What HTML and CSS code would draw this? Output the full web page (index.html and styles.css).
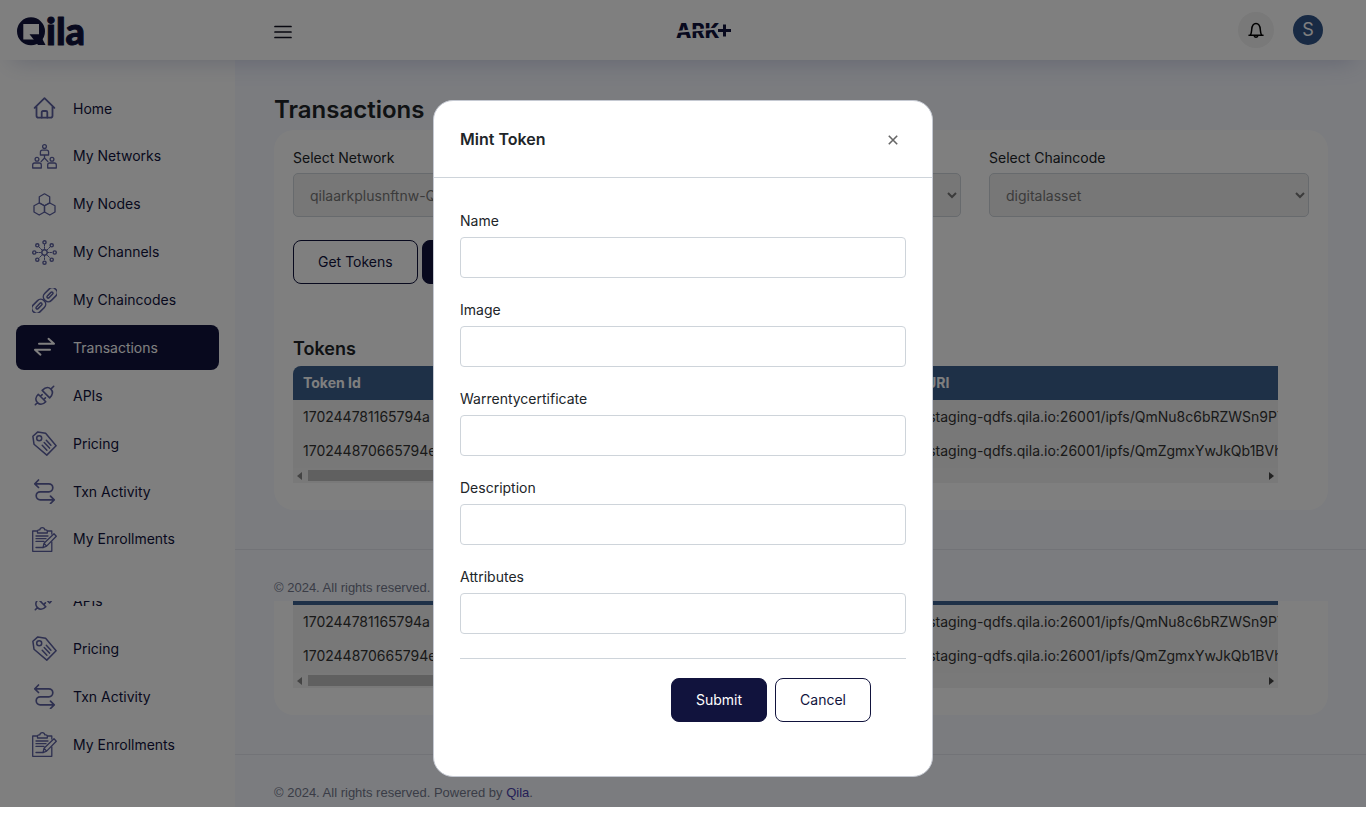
FILE: index.html
```html
<!DOCTYPE html>
<html lang="en">
<head>
<meta charset="utf-8">
<meta name="viewport" content="width=device-width, initial-scale=1">
<title>Qila - Transactions</title>
<link rel="stylesheet" href="styles.css">
</head>
<body>
<svg class="sprite" aria-hidden="true">
  <symbol id="i-home" viewBox="0 0 25 25"><g stroke-width="1.8"><path d="M2.6 11.8 12.5 2.2l9.9 9.6M4.5 10.5v9.3c0 1.1.8 1.9 1.9 1.9h12.2c1.1 0 1.9-.8 1.9-1.9v-9.3"/><path d="M9.7 21.5v-5.2c0-.8.5-1.3 1.3-1.3h3c.8 0 1.3.5 1.3 1.3v5.2"/></g></symbol>
  <symbol id="i-net" viewBox="0 0 25 25"><g stroke-width="1.3"><circle cx="12.5" cy="2.6" r="1.9"/><path d="M8.4 11V8.2c0-1.2.8-2 2-2h4.2c1.2 0 2 .8 2 2V11zM12.5 11v3l-3.4 3.6M12.5 14l3.4 3.6"/><circle cx="5" cy="15.3" r="1.9"/><path d="M.7 24v-3c0-1.200.8-2 2-2h4.600c1.200 0 2 .8 2 2v3z"/><circle cx="20" cy="15.300" r="1.900"/><path d="M15.700 24v-3c0-1.200.8-2 2-2h4.600c1.200 0 2 .8 2 2v3z"/></g></symbol>
  <symbol id="i-nodes" viewBox="0 0 25 25"><g stroke-width="1.3"><path d="M12.500 1.800l5.200 2.900v6l-5.200 3-5.200-3v-6z"/><path d="M7.200 11l5.300 2.800v6.200l-5.300 3L2 20v-6.200z"/><path d="M17.800 11l5.200 2.800v6.200l-5.200 3-5.300-3v-6.200z"/></g></symbol>
  <symbol id="i-chan" viewBox="0 0 25 25"><g stroke-width="1.4"><circle cx="12.500" cy="12.500" r="2.700"/><circle cx="12.500" cy="2.300" r="1.600"/><circle cx="12.500" cy="22.700" r="1.600"/><circle cx="2.300" cy="12.500" r="1.600"/><circle cx="22.700" cy="12.500" r="1.600"/><circle cx="5.300" cy="5.300" r="1.600"/><circle cx="19.700" cy="5.300" r="1.600"/><circle cx="5.300" cy="19.700" r="1.600"/><circle cx="19.700" cy="19.700" r="1.600"/></g><path stroke-width="1" stroke-dasharray="1.500 1" d="M12.500 4.500v5M12.500 15.500v5M4.500 12.500h5M15.500 12.500h5M7 7l3.500 3.500M14.500 14.500 18 18M18 7l-3.500 3.500M10.500 14.500 7 18"/></symbol>
  <symbol id="i-chain" viewBox="0 0 25 25"><g stroke-width="1.5" transform="rotate(-45 12.500 12.500)"><rect x="-3.300" y="7.700" width="15.300" height="9.600" rx="4.500"/><rect x="13" y="7.700" width="15.300" height="9.600" rx="4.500"/><rect x="1" y="11.300" width="7.500" height="2.400" rx="1.200"/><rect x="16.500" y="11.300" width="7.500" height="2.400" rx="1.200"/></g></symbol>
  <symbol id="i-swap" viewBox="0 0 25 25"><path stroke-width="2" d="M7 8.800h15l-5.500-5M18 14.700H3l5.500 5"/></symbol>
  <symbol id="i-api" viewBox="0 0 25 25"><g stroke-width="1.600" transform="rotate(-45 12.500 12.500)"><path d="M-.500 12.500H2.500M9 7.200c-4.500 0-6.500 2.300-6.500 5.300s2 5.300 6.500 5.300zM9 10.200h2.500M9 14.800h2.500M14.500 7.200v10.600c5 0 7-2.300 7-5.300s-2-5.300-7-5.300zM21.500 12.500h4"/></g></symbol>
  <symbol id="i-tag" viewBox="0 0 25 25"><g stroke-width="1.500"><path d="M.900 5.300 5.800.900l7.800 1.400 10.500 12.500-9.300 9.300L2 13.200z"/><circle cx="7.200" cy="7.200" r="2.500"/><path d="M10.200 14.200l4.700 5M12.200 11.500l5.300 5.600M14.300 9.200l4.600 5"/></g></symbol>
  <symbol id="i-txn" viewBox="0 0 25 25"><path stroke-width="1.700" d="M6.500 1 2.800 4.800l3.700 3.700M3.200 4.800h13.600a4 4 0 0 1 0 8H8.200a4 4 0 0 0 0 8h13.600M18.500 17.200l3.700 3.700-3.700 3.600"/></symbol>
  <symbol id="i-enroll" viewBox="0 0 25 25"><g stroke-width="1.300"><path d="M5.500 4H.700v20.300h19.100V15M19.800 7V4h-4.500M5.500 6V4.300c0-.9.600-1.500 1.500-1.500h.8C8 1.500 9 .700 10.300.700s2.300.8 2.500 2.100h1c.9 0 1.500.6 1.500 1.500V6z"/><path d="M4 9h12M4 11.700h10M4 14.400h8M4 20.500h7"/><path d="M11 20.600l1-4.300L22 6.700l2.300 2.500-9.700 9.900zM12 16.300l2.600 2.800"/></g></symbol>
</svg>

<div class="page">
  <div class="screen">
    <header class="topbar">
      <a class="brand" href="#" aria-label="Qila">
        <svg width="70" height="34" viewBox="0 0 70 34">
          <path class="ink" fill-rule="evenodd" d="M15 4.300a14 14 0 1 1 0 28 14 14 0 0 1 0-28zM7.300 11v15.500h15.700V11z"/>
          <path class="ink" d="M13.500 21.300H24L29.500 32H22z"/>
          <text class="brand-text" x="30" y="32">ila</text>
        </svg>
      </a>
      <button class="menu" type="button" aria-label="Toggle menu">
        <svg width="18" height="14" viewBox="0 0 18 14"><path d="M1 1.500h16M1 7h16M1 12.500h16"/></svg>
      </button>
      <div class="partner">
        <svg width="56" height="20" viewBox="0 0 56 20" role="img" aria-label="ARK+">
          <text class="partner-text" x="0" y="18">ARK</text>
          <path class="partner-cut" d="M0 12 16 10.500 43 8.500"/>
          <path class="partner-plus" d="M42 10.500h13M48.500 4.500v12"/>
        </svg>
      </div>
      <div class="account">
        <button class="bell" type="button" aria-label="Notifications">
          <svg width="16" height="17" viewBox="0 0 16 17"><path d="M1 13.200h14M2.500 13c1-2 1-3.300 1.200-5.500C4 4 5 1.500 8 1.500S12 4 12.300 7.500c.2 2.200.2 3.500 1.200 5.500M6.300 14c.4 1.600 3 1.600 3.400 0"/></svg>
        </button>
        <button class="avatar" type="button">S</button>
      </div>
    </header>

    <div class="body">
      <nav class="side">
        <ul class="nav">
          <li><a class="item" href="#"><svg class="ico"><use href="#i-home"/></svg>Home</a></li>
          <li><a class="item" href="#"><svg class="ico"><use href="#i-net"/></svg>My Networks</a></li>
          <li><a class="item" href="#"><svg class="ico"><use href="#i-nodes"/></svg>My Nodes</a></li>
          <li><a class="item" href="#"><svg class="ico"><use href="#i-chan"/></svg>My Channels</a></li>
          <li><a class="item" href="#"><svg class="ico"><use href="#i-chain"/></svg>My Chaincodes</a></li>
          <li><a class="item active" href="#"><svg class="ico"><use href="#i-swap"/></svg>Transactions</a></li>
          <li><a class="item" href="#"><svg class="ico"><use href="#i-api"/></svg>APIs</a></li>
          <li><a class="item" href="#"><svg class="ico"><use href="#i-tag"/></svg>Pricing</a></li>
          <li><a class="item" href="#"><svg class="ico"><use href="#i-txn"/></svg>Txn Activity</a></li>
          <li><a class="item" href="#"><svg class="ico"><use href="#i-enroll"/></svg>My Enrollments</a></li>
        </ul>
      </nav>
      <main class="main">
        <div class="content">
          <h1 class="title">Transactions</h1>
          <section class="card">
            <div class="filters">
              <div class="filter"><label for="network">Select Network</label><select id="network" disabled><option>qilaarkplusnftnw-Q</option></select></div>
              <div class="filter"><label for="channel">Select Channel</label><select id="channel" disabled><option>channel</option></select></div>
              <div class="filter"><label for="chaincode">Select Chaincode</label><select id="chaincode" disabled><option>digitalasset</option></select></div>
            </div>
            <div class="actions">
              <button class="btn outline" type="button">Get Tokens</button>
              <button class="btn solid" type="button">Mint Token</button>
            </div>
            <h2 class="subtitle">Tokens</h2>
            <div class="tablebox">
              <table class="tokens">
                <thead><tr><th class="c-id">Token Id</th><th>Token URI</th></tr></thead>
                <tbody>
                  <tr><td>170244781165794a</td><td>https://staging-qdfs.qila.io:26001/ipfs/QmNu8c6bRZWSn9PY</td></tr>
                  <tr><td>170244870665794e</td><td>https://staging-qdfs.qila.io:26001/ipfs/QmZgmxYwJkQb1BVh</td></tr>
                </tbody>
              </table>
              <div class="scroll"><span class="arrow left"></span><span class="thumb"></span><span class="arrow right"></span></div>
            </div>
          </section>
        </div>
        <footer class="foot">© 2024. All rights reserved. Powered by <a href="#">Qila</a>.</footer>
      </main>
    </div>
  </div>

  <div class="body tail">
    <div class="side">
      <ul class="nav nav-tail">
        <li><a class="item" href="#"><svg class="ico"><use href="#i-api"/></svg>APIs</a></li>
        <li><a class="item" href="#"><svg class="ico"><use href="#i-tag"/></svg>Pricing</a></li>
        <li><a class="item" href="#"><svg class="ico"><use href="#i-txn"/></svg>Txn Activity</a></li>
        <li><a class="item" href="#"><svg class="ico"><use href="#i-enroll"/></svg>My Enrollments</a></li>
      </ul>
    </div>
    <div class="main">
      <div class="content">
        <section class="card card-tail">
          <div class="tablebox square">
            <table class="tokens">
              <tbody>
                <tr><td class="c-id">170244781165794a</td><td>https://staging-qdfs.qila.io:26001/ipfs/QmNu8c6bRZWSn9PY</td></tr>
                <tr><td>170244870665794e</td><td>https://staging-qdfs.qila.io:26001/ipfs/QmZgmxYwJkQb1BVh</td></tr>
              </tbody>
            </table>
            <div class="scroll"><span class="arrow left"></span><span class="thumb"></span><span class="arrow right"></span></div>
          </div>
        </section>
      </div>
      <footer class="foot">© 2024. All rights reserved. Powered by <a href="#">Qila</a>.</footer>
    </div>
  </div>

  <div class="backdrop">
    <form class="modal" role="dialog" aria-labelledby="modal-title">
      <div class="modal-head">
        <h2 id="modal-title">Mint Token</h2>
        <button class="close" type="button" aria-label="Close"><svg width="10" height="10" viewBox="0 0 10 10"><path d="M.8.8l8.400 8.400M9.200.8.8 9.200"/></svg></button>
      </div>
      <div class="modal-body">
        <div class="field"><label for="f-name">Name</label><input id="f-name" type="text"></div>
        <div class="field"><label for="f-image">Image</label><input id="f-image" type="text"></div>
        <div class="field"><label for="f-warranty">Warrentycertificate</label><input id="f-warranty" type="text"></div>
        <div class="field"><label for="f-desc">Description</label><input id="f-desc" type="text"></div>
        <div class="field"><label for="f-attr">Attributes</label><input id="f-attr" type="text"></div>
        <div class="modal-actions">
          <button class="btn solid" type="submit">Submit</button>
          <button class="btn outline" type="button">Cancel</button>
        </div>
      </div>
    </form>
  </div>
</div>
</body>
</html>
```
FILE: styles.css
```css
:root {
  --navy: #11133d;
  --line: #ced4da;
  --page: #f6f8ff;
}

* { box-sizing: border-box; }

body {
  margin: 0;
  background: #fff;
  color: #212529;
  font: 14px/24px Inter, "Liberation Sans", sans-serif;
}

h1, h2, ul { margin: 0; padding: 0; }
ul { list-style: none; }
a { color: inherit; text-decoration: none; }
button, input, select { font: inherit; color: inherit; }
svg { fill: none; stroke: currentColor; stroke-linecap: round; stroke-linejoin: round; overflow: visible; }

.sprite { position: absolute; width: 0; height: 0; }

.page { position: relative; overflow: hidden; }

/* top bar */
.topbar {
  position: relative;
  z-index: 1;
  display: grid;
  grid-template-columns: 257px 15fr auto 22fr;
  align-items: center;
  height: 60px;
  padding: 0 43px 0 16px;
  background: #fff;
  box-shadow: 0 12px 24px -12px rgba(60, 75, 140, .28);
}
.brand svg { display: block; }
.ink { fill: var(--navy); stroke: none; }
.brand-text { fill: var(--navy); stroke: var(--navy); stroke-width: 1; font: 900 38px Lato, sans-serif; }
.menu { justify-self: start; padding: 3px 0 0 1px; border: 0; background: none; line-height: 0; color: #101020; }
.menu svg { stroke-width: 1.7; }
.partner { line-height: 0; }
.partner-text { fill: var(--navy); stroke: none; font: 800 20px Inter, sans-serif; }
.partner-cut { stroke: #fff; stroke-width: 2; }
.partner-plus { stroke: var(--navy); stroke-width: 3; stroke-linecap: butt; }
.account { display: flex; justify-content: flex-end; align-items: center; gap: 19px; }
.bell, .avatar { display: grid; place-items: center; padding: 0; border: 0; border-radius: 50%; }
.bell { width: 36px; height: 36px; background: #f2f2f2; color: #000; }
.bell svg { stroke-width: 1.5; }
.avatar { width: 30px; height: 30px; background: #305488; color: #fff; font-size: 18px; }

/* layout */
.body { display: flex; }
.side { display: flex; flex: 0 0 235px; padding: 26px 16px 39px; background: #fff; }
.nav { display: flex; flex: 1; flex-direction: column; justify-content: space-between; }
.item {
  display: flex;
  align-items: center;
  gap: 16px;
  height: 45px;
  padding: 0 16px;
  border-radius: 8px;
  color: var(--navy);
}
.ico { flex: none; width: 25px; height: 25px; color: #5c60a0; }
.item.active, .item.active .ico { color: #fff; }
.item.active { background: var(--navy); }

.main { flex: 1; min-width: 0; background: var(--page); }
.content { padding: 35px 38px 39px 39px; }
.title { margin-bottom: 5px; font-size: 24px; font-weight: 600; line-height: 30px; color: #212529; }
.card { padding: 16px 19px 27px; border-radius: 20px; background: #fff; }

.filters { display: grid; grid-template-columns: repeat(3, 1fr); gap: 28px; }
.filter label { display: block; margin-bottom: 3px; }
.filter select {
  display: block;
  width: 100%;
  height: 44px;
  padding: 0 12px;
  border: 1px solid var(--line);
  border-radius: 5px;
  background-color: #efefef;
  color: #777;
  opacity: 1;
}

.actions { display: flex; gap: 4px; margin-top: 23px; }
.btn { height: 44px; padding: 0 24px; border: 1px solid var(--navy); border-radius: 8px; }
.solid { background: var(--navy); color: #fff; }
.outline { background: #fff; color: var(--navy); }

.subtitle { margin: 53px 0 5px; font-size: 18px; font-weight: 600; line-height: 24px; }
.tablebox { margin-right: 31px; overflow: hidden; border-radius: 8px 0 0 0; background: #f0f0f0; }
.tokens { width: 100%; table-layout: fixed; border-collapse: collapse; white-space: nowrap; text-align: left; color: #333; }
.tokens th, .tokens td { height: 34px; padding: 0 10px; line-height: 24px; }
.tokens td + td { padding-right: 0; overflow: hidden; }
.tokens thead { background: #3c608f; color: #fff; }
.tokens .c-id { width: 578px; }

.scroll { display: flex; align-items: center; height: 15px; background: #f2f2f2; }
.arrow { border: 4px solid transparent; }
.arrow.left { margin: 0 6px 0 4px; border-right: 5px solid #888; border-left-width: 0; }
.arrow.right { margin: 0 4px 0 auto; border-left: 5px solid #444; border-right-width: 0; }
.thumb { width: 560px; height: 11px; background: #c1c1c1; }

.foot {
  padding: 30px 39px 6px;
  border-top: 1px solid #e4e7ee;
  color: #74788d;
  font: 13px/15px "Liberation Sans", Arial, sans-serif;
}
.foot a { color: #4a3fae; }

/* continuation strip under the first screen */
.tail { align-items: stretch; height: 206px; overflow: hidden; }
.tail .side { align-items: flex-end; padding-bottom: 40px; }
.tail .main { display: flex; flex-direction: column; justify-content: flex-end; }
.tail .content { padding-top: 0; }
.nav-tail { height: 189px; flex-shrink: 0; }
.tail .foot { padding-bottom: 7px; }
.card-tail { padding-top: 0; border-radius: 0 0 20px 20px; }
.square { border-top: 4px solid #3c608f; border-radius: 0; }

/* dialog */
.backdrop {
  position: absolute;
  inset: 0;
  z-index: 2;
  display: flex;
  align-items: flex-start;
  justify-content: center;
  padding-top: 100px;
  background: rgba(0, 0, 0, .5);
}
.modal {
  width: 500px;
  max-width: 100%;
  border: 1px solid #c5c9d2;
  border-radius: 20px;
  background: #fff;
}
.modal-head {
  display: flex;
  align-items: center;
  justify-content: space-between;
  height: 77px;
  padding: 0 26px;
  border-bottom: 1px solid var(--line);
}
.modal-head h2 { font-size: 16px; font-weight: 600; }
.close { display: grid; place-items: center; width: 26px; height: 26px; padding: 2px 0 0; border: 0; background: none; color: #666; }
.close svg { stroke-width: 1.6; stroke-linecap: butt; }
.modal-body { padding: 31px 26px 54px; }
.field { margin-bottom: 20px; }
.field label { display: block; margin-bottom: 4px; }
.field input { display: block; width: 100%; height: 41px; padding: 0 12px; border: 1px solid var(--line); border-radius: 4px; background: #fff; }
.modal-actions {
  display: flex;
  justify-content: flex-end;
  gap: 8px;
  margin-top: 24px;
  padding: 19px 35px 0 0;
  border-top: 1px solid var(--line);
}
```
